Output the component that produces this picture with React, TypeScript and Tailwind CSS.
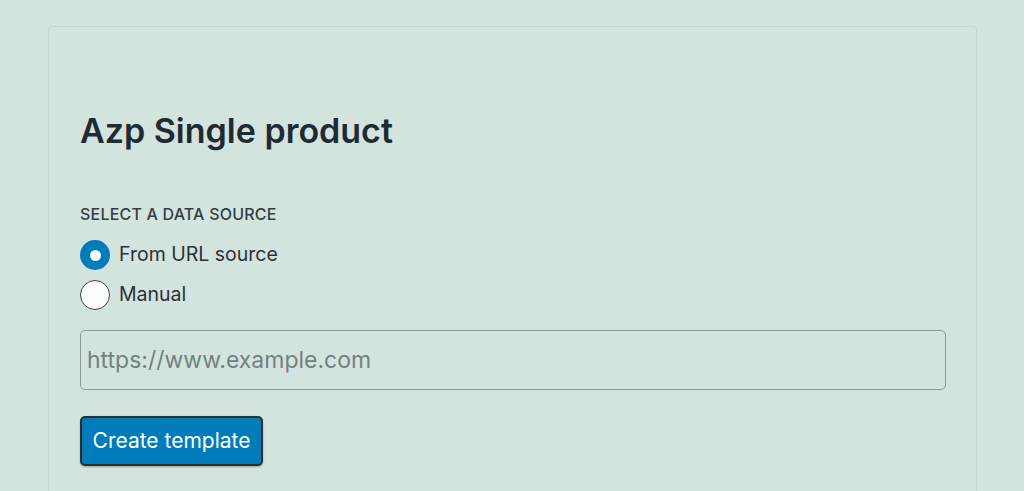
export default function App() {
  return (
    <div
      className="min-h-screen bg-[#d3e4de] pl-12 pr-[47px] pt-[26px] overflow-hidden"
      style={{ fontFamily: 'Inter, "Noto Sans", sans-serif' }}
    >
      <div className="h-[520px] rounded-[4px] border border-[#c6d7d1] px-[31px] pt-[84px]">
        <h1 className="text-[34px] leading-[40px] font-semibold text-[#1e2b33]">Azp Single product</h1>

        <div className="mt-[53px] text-[16px] leading-[20px] font-medium tracking-[0.2px] text-[#343d44] uppercase">
          Select a data source
        </div>

        <div className="mt-[16px] flex flex-col gap-[10px]">
          <label className="flex items-center gap-[9px] h-[30px]">
            <span className="w-[30px] h-[30px] rounded-full bg-[#007cba] flex items-center justify-center">
              <span className="w-[11px] h-[11px] rounded-full bg-white" />
            </span>
            <span className="text-[19.5px] text-[#2a3138]">From URL source</span>
          </label>
          <label className="flex items-center gap-[9px] h-[30px]">
            <span className="w-[30px] h-[30px] rounded-full bg-white border-[1.5px] border-[#3d4248]" />
            <span className="text-[19.5px] text-[#2a3138]">Manual</span>
          </label>
        </div>

        <input
          className="mt-[20px] block w-[866px] h-[60px] rounded-[5px] border border-[#8c9a96] bg-transparent px-[6px] text-[23px] text-[#2a3138] placeholder:text-[#73817e] outline-none"
          placeholder="https://www.example.com"
        />

        <button className="mt-[26px] h-[50px] w-[183px] rounded-[5px] bg-[#007cba] border-2 border-[#2a2f33] text-white text-[21px] shadow-[0_1px_2px_rgba(0,0,0,0.3)]">
          Create template
        </button>
      </div>
    </div>
  );
}
